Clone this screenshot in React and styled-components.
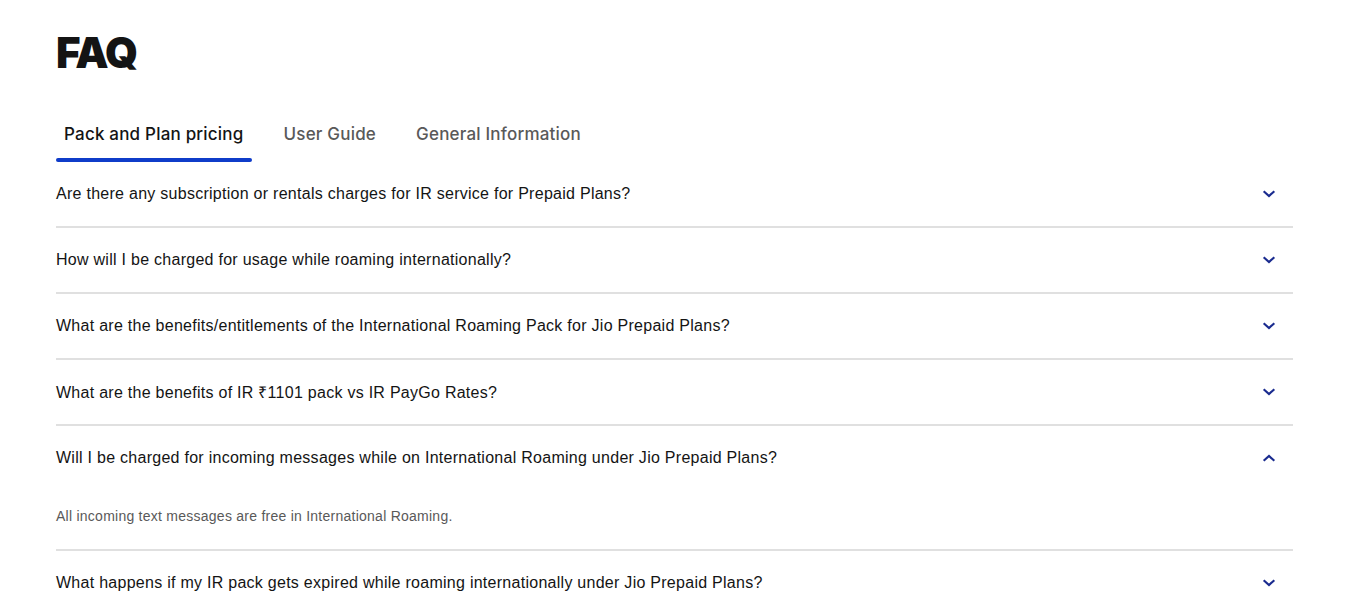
import React, { useState } from 'react';
import styled, { createGlobalStyle } from 'styled-components';

const GlobalStyle = createGlobalStyle`
  body {
    margin: 0;
    background: #fff;
    font-family: 'Liberation Sans', Arial, sans-serif;
    color: #141414;
  }
`;

const Section = styled.section`
  padding: 26px 73px 40px 56px;
`;

const Title = styled.h2`
  margin: 0;
  font-family: Inter, 'Liberation Sans', sans-serif;
  font-weight: 900;
  font-size: 42px;
  line-height: 54px;
  letter-spacing: -1.5px;
  color: #141414;
`;

const TabList = styled.div`
  display: flex;
  gap: 24px;
  margin-top: 42px;
`;

const Tab = styled.button`
  position: relative;
  border: 0;
  background: none;
  padding: 0 8px 16px;
  font-family: Inter, 'Liberation Sans', sans-serif;
  font-size: 17px;
  line-height: 24px;
  font-weight: 500;
  letter-spacing: 0.2px;
  color: ${p => (p.$active ? '#141414' : '#595959')};
  cursor: pointer;

  &::after {
    content: '';
    position: absolute;
    left: 0;
    right: 0;
    bottom: 0;
    height: 4px;
    border-radius: 2px;
    background: ${p => (p.$active ? '#0f3cc9' : 'transparent')};
  }
`;

const List = styled.div`
  display: flex;
  flex-direction: column;
`;

const Item = styled.div`
  border-bottom: 2px solid #e0e0e0;
`;

const Question = styled.button`
  width: 100%;
  height: 64px;
  display: flex;
  align-items: center;
  justify-content: space-between;
  border: 0;
  background: none;
  padding: 0 12px 0 0;
  text-align: left;
  font-family: 'Liberation Sans', Arial, sans-serif;
  font-size: 16px;
  letter-spacing: 0.27px;
  color: #141414;
  cursor: pointer;
`;

const Answer = styled.p`
  margin: 0;
  padding: 16px 0 23px;
  font-family: 'Liberation Sans', Arial, sans-serif;
  font-size: 14px;
  line-height: 20px;
  letter-spacing: 0.25px;
  color: #595959;
`;

const Chevron = styled.svg`
  width: 24px;
  height: 24px;
  flex-shrink: 0;
  transform: ${p => (p.$open ? 'rotate(180deg)' : 'none')};
`;

const tabs = ['Pack and Plan pricing', 'User Guide', 'General Information'];

const faqs = [
  { q: 'Are there any subscription or rentals charges for IR service for Prepaid Plans?' },
  { q: 'How will I be charged for usage while roaming internationally?' },
  { q: 'What are the benefits/entitlements of the International Roaming Pack for Jio Prepaid Plans?' },
  { q: 'What are the benefits of IR \u20b91101 pack vs IR PayGo Rates?' },
  {
    q: 'Will I be charged for incoming messages while on International Roaming under Jio Prepaid Plans?',
    a: 'All incoming text messages are free in International Roaming.',
  },
  { q: 'What happens if my IR pack gets expired while roaming internationally under Jio Prepaid Plans?' },
  { q: 'Can I recharge my IR pack while I am abroad?' },
  { q: 'How do I check my IR pack balance and validity?' },
];

function ChevronIcon({ open }) {
  return (
    <Chevron $open={open} viewBox="0 0 24 24" fill="none">
      <path d="M7.5 10l4.5 4 4.5-4" stroke="#1a2b8f" strokeWidth="2.2" strokeLinecap="square" />
    </Chevron>
  );
}

export default function App() {
  const [active, setActive] = useState(0);
  const [open, setOpen] = useState(4);

  return (
    <Section>
      <GlobalStyle />
      <Title>FAQ</Title>
      <TabList>
        {tabs.map((t, i) => (
          <Tab key={t} $active={i === active} onClick={() => setActive(i)}>
            {t}
          </Tab>
        ))}
      </TabList>
      <List>
        {faqs.map((f, i) => (
          <Item key={f.q}>
            <Question onClick={() => setOpen(open === i ? -1 : i)}>
              {f.q}
              <ChevronIcon open={open === i} />
            </Question>
            {open === i && f.a && <Answer>{f.a}</Answer>}
          </Item>
        ))}
      </List>
    </Section>
  );
}
